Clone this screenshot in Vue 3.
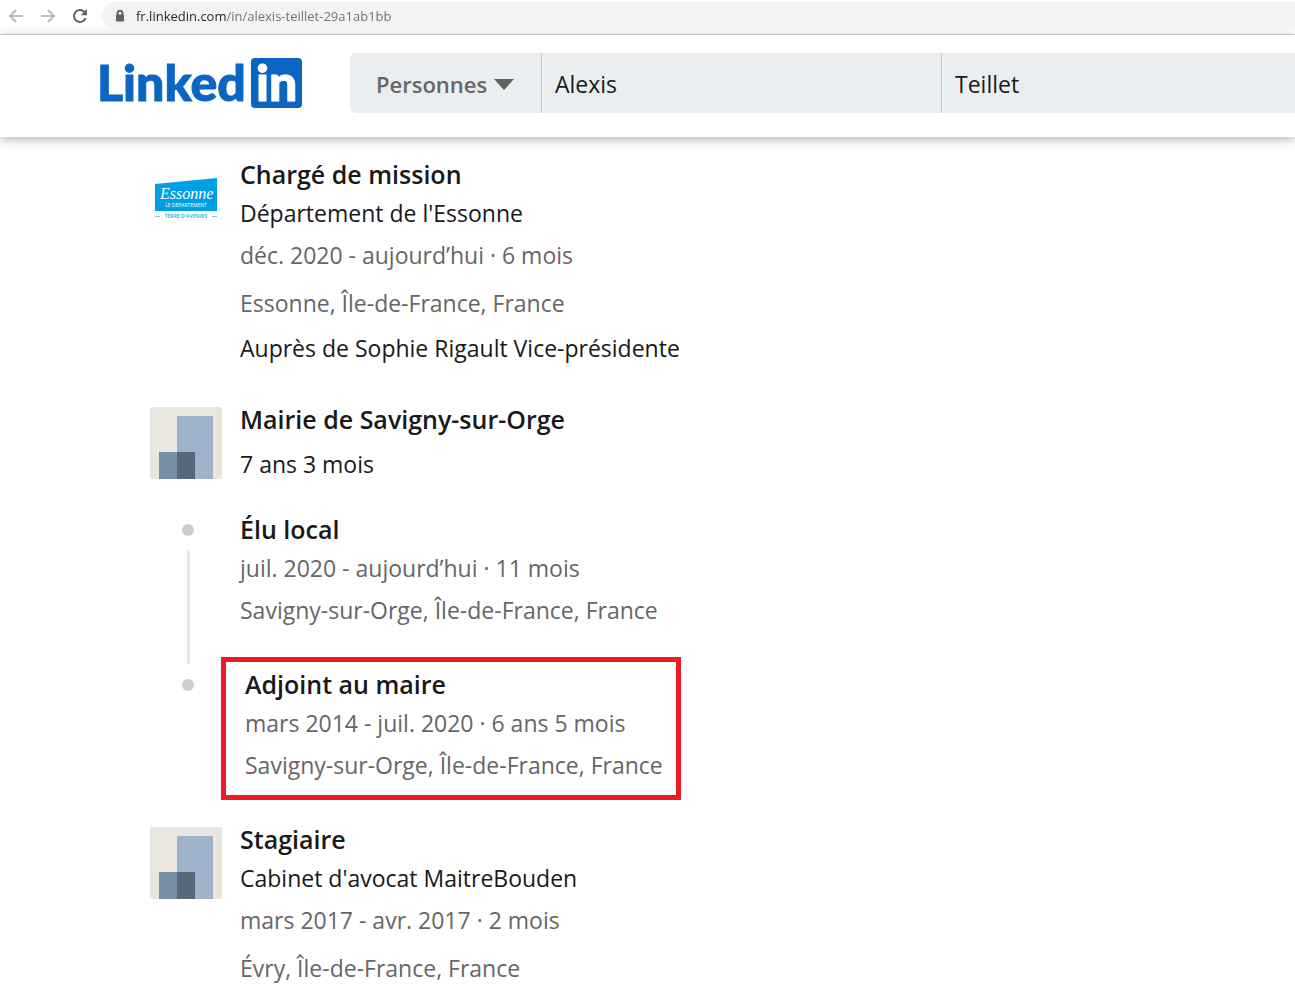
<template>
  <div class="page">
    <nav class="toolbar" aria-label="Navigateur">
      <button class="tool" type="button" aria-label="Précédent">
        <svg width="16" height="16" viewBox="0 0 16 16">
          <path d="M15 8H2.500M8 2 2 8l6 6" />
        </svg>
      </button>
      <button class="tool" type="button" aria-label="Suivant">
        <svg width="16" height="16" viewBox="0 0 16 16">
          <path d="M1 8h12.500M8 2l6 6-6 6" />
        </svg>
      </button>
      <button class="tool reload" type="button" aria-label="Actualiser">
        <svg width="16" height="16" viewBox="0 0 16 16">
          <path d="M13.600 10.200A6 6 0 1 1 12.300 3.800L14 5.500" />
          <path class="solid" d="M15 1v6.200H8.800z" />
        </svg>
      </button>
      <label class="omnibox">
        <svg width="10" height="12" viewBox="0 0 10 12" aria-hidden="true">
          <path d="M2.500 5V3.200a2.500 2.500 0 0 1 5 0V5" />
          <rect x="1" y="4.500" width="8" height="7" rx="1" />
        </svg>
        <input v-model="url" type="text" aria-label="Adresse" />
      </label>
    </nav>

    <header class="header">
      <a class="brand" href="#" aria-label="LinkedIn">
        <svg width="212" height="72" viewBox="0 0 212 72">
          <text class="brand-word" x="7" y="54">Linked</text>
          <rect x="161" y="11" width="51" height="50" rx="4" />
          <text class="brand-in" x="166" y="54">in</text>
        </svg>
      </a>
      <form class="search" @submit.prevent>
        <div class="search-type">
          <select v-model="searchType" aria-label="Type de recherche">
            <option>Personnes</option>
            <option>Emplois</option>
          </select>
          <svg class="caret" width="20" height="11" viewBox="0 0 20 11">
            <path d="M0 0h20L10 11z" />
          </svg>
        </div>
        <input v-model="firstName" class="first-name" type="text" aria-label="Prénom" />
        <input v-model="lastName" class="last-name" type="text" aria-label="Nom" />
      </form>
    </header>

    <main class="experience">
      <section
        v-for="job in jobs"
        :key="job.title"
        class="job"
        :class="{ grouped: job.roles }"
      >
        <svg v-if="job.logo === 'essonne'" class="logo" viewBox="0 0 72 72" aria-hidden="true">
          <path d="M5 22 67 16v33H5z" fill="#009fe3" />
          <text class="essonne-name" x="10" y="37">Essonne</text>
          <text class="essonne-sub" x="36" y="45">LE DÉPARTEMENT</text>
          <path d="M5 54.500h5M62 54.500h5" stroke="#79c8ec" />
          <text class="essonne-tag" x="36" y="56">TERRE D'AVENIRS</text>
        </svg>
        <svg v-else class="logo" viewBox="0 0 72 72" aria-hidden="true">
          <rect width="72" height="72" rx="2" fill="#e9e5df" />
          <path d="M27 9h36v63H27z" fill="#9eb3c9" />
          <path d="M9 45h18v27H9z" fill="#788fa8" />
          <path d="M27 45h18v27H27z" fill="#56687a" />
        </svg>
        <div class="details">
          <h3>{{ job.title }}</h3>
          <p v-if="job.company" class="company">{{ job.company }}</p>
          <p v-if="job.total" class="total">{{ job.total }}</p>
          <p v-if="job.dates" class="dates">{{ job.dates }}</p>
          <p v-if="job.place" class="place">{{ job.place }}</p>
          <p v-if="job.description" class="description">{{ job.description }}</p>
        </div>
        <ul v-if="job.roles" class="roles">
          <li v-for="role in job.roles" :key="role.title" class="role">
            <span class="rail"></span>
            <div class="role-body" :class="{ highlighted: role.highlighted }">
              <h3>{{ role.title }}</h3>
              <p class="company muted">{{ role.dates }}</p>
              <p class="dates">{{ role.place }}</p>
            </div>
          </li>
        </ul>
      </section>
    </main>
  </div>
</template>

<script setup>
import { ref } from "vue";

const url = ref("fr.linkedin.com/in/alexis-teillet-29a1ab1bb");
const searchType = ref("Personnes");
const firstName = ref("Alexis");
const lastName = ref("Teillet");

const jobs = [
  {
    logo: "essonne",
    title: "Chargé de mission",
    company: "Département de l'Essonne",
    dates: "déc. 2020 - aujourd’hui · 6 mois",
    place: "Essonne, Île-de-France, France",
    description: "Auprès de Sophie Rigault Vice-présidente",
  },
  {
    title: "Mairie de Savigny-sur-Orge",
    total: "7 ans 3 mois",
    roles: [
      {
        title: "Élu local",
        dates: "juil. 2020 - aujourd’hui · 11 mois",
        place: "Savigny-sur-Orge, Île-de-France, France",
      },
      {
        title: "Adjoint au maire",
        dates: "mars 2014 - juil. 2020 · 6 ans 5 mois",
        place: "Savigny-sur-Orge, Île-de-France, France",
        highlighted: true,
      },
    ],
  },
  {
    title: "Stagiaire",
    company: "Cabinet d'avocat MaitreBouden",
    dates: "mars 2017 - avr. 2017 · 2 mois",
    place: "Évry, Île-de-France, France",
  },
];
</script>

<style>
body {
  background: #fff;
}
</style>

<style scoped>
.page {
  font-family: "Open Sans", "Noto Sans", sans-serif;
  font-size: 23px;
  line-height: 34px;
  color: #191919;
}

input,
select,
button {
  margin: 0;
  padding: 0;
  border: 0;
  border-radius: 0;
  outline: 0;
  background: none;
  font: inherit;
  color: inherit;
}

.toolbar {
  display: flex;
  align-items: center;
  gap: 16px;
  height: 34px;
  padding-left: 8px;
  border-bottom: 1px solid #d8dadc;
}

.tool {
  display: flex;
  margin-bottom: 2px;
}

.tool path {
  fill: none;
  stroke: #bababa;
  stroke-width: 2;
}

.tool.reload path {
  stroke: #5f6368;
}

.tool.reload .solid {
  fill: #5f6368;
  stroke: none;
}

.omnibox {
  display: flex;
  flex: 1;
  align-items: center;
  gap: 11px;
  height: 28px;
  margin: 0 0 2px -2px;
  padding-left: 13px;
  border-radius: 14px 0 0 14px;
  background: #f1f3f4;
}

.omnibox path {
  fill: none;
  stroke: #5f6368;
  stroke-width: 2;
}

.omnibox rect {
  fill: #5f6368;
}

/* the host part of the address is darker than its path */
.omnibox input {
  flex: 1;
  font-size: 13px;
  line-height: 20px;
  background: linear-gradient(to right, #202124 91px, #6b6e72 91px);
  -webkit-background-clip: text;
  background-clip: text;
  -webkit-text-fill-color: transparent;
}

.header {
  display: flex;
  align-items: center;
  gap: 48px;
  height: 102px;
  padding-left: 90px;
  box-shadow: 0 2px 10px rgba(0, 0, 0, 0.32);
}

.brand {
  display: flex;
  margin-bottom: 6px;
}

.brand svg {
  fill: #0a66c2;
}

.brand text {
  font-family: Lato, sans-serif;
  font-size: 50px;
  font-weight: 900;
  stroke: #0a66c2;
  stroke-width: 1;
}

.brand .brand-in {
  fill: #fff;
  stroke: #fff;
}

.search {
  display: flex;
  flex: 1;
  height: 60px;
  margin-bottom: 6px;
  border-radius: 6px 0 0 6px;
  background: #eaeef1;
  overflow: hidden;
}

.search-type {
  position: relative;
  display: flex;
  width: 191px;
}

.search-type select {
  width: 100%;
  padding: 2px 0 0 26px;
  appearance: none;
  color: #666;
  font-size: 22px;
  font-weight: 600;
}

.caret {
  position: absolute;
  top: 26px;
  right: 27px;
  fill: #5e615f;
  pointer-events: none;
}

.search input {
  min-width: 0;
  padding: 2px 13px 0;
  border-left: 1px solid #c5c9cc;
}

.first-name {
  width: 373px;
}

.last-name {
  flex: 1;
}

.experience {
  display: flex;
  flex-direction: column;
  gap: 37px;
  padding: 20px 24px 18px 150px;
}

.job {
  display: grid;
  grid-template-columns: 72px 1fr;
  column-gap: 18px;
}

.job.grouped {
  margin-bottom: -15px;
}

.logo {
  width: 72px;
  height: 72px;
  margin-top: 5px;
}

.essonne-name {
  fill: #fff;
  font-family: "Liberation Serif", serif;
  font-size: 16px;
  font-style: italic;
}

.essonne-sub,
.essonne-tag {
  font-family: "Open Sans", sans-serif;
  font-size: 5px;
  text-anchor: middle;
}

.essonne-sub {
  fill: #fff;
}

.essonne-tag {
  fill: #44b5e6;
  font-weight: 700;
}

h3,
p,
ul {
  margin: 0;
  padding: 0;
}

h3 {
  font-size: 25px;
  font-weight: 600;
}

.company {
  margin-top: 5px;
}

.dates {
  margin-top: 8px;
}

.place {
  margin-top: 14px;
}

.total,
.description {
  margin-top: 11px;
}

.muted,
.dates,
.place {
  color: #666;
}

.roles {
  grid-column: 1 / -1;
  display: flex;
  flex-direction: column;
  gap: 30px;
  margin-top: 31px;
  list-style: none;
}

.role {
  display: grid;
  grid-template-columns: 72px 1fr;
  column-gap: 18px;
}

.rail {
  display: flex;
  flex-direction: column;
  align-items: center;
  gap: 14px;
  padding: 12px 0 0 4px;
}

.rail::before {
  content: "";
  width: 12px;
  height: 12px;
  border-radius: 50%;
  background: #cdcdcd;
}

.role:not(:last-child) .rail::after {
  content: "";
  flex: 1;
  width: 3px;
  margin-bottom: -37px;
  border-radius: 2px;
  background: #e6e6e6;
}

.role:last-child .rail {
  padding-top: 22px;
}

.highlighted {
  width: fit-content;
  margin-left: -19px;
  padding: 5px 13px 13px 19px;
  border: 5px solid #ed1c24;
}
</style>
